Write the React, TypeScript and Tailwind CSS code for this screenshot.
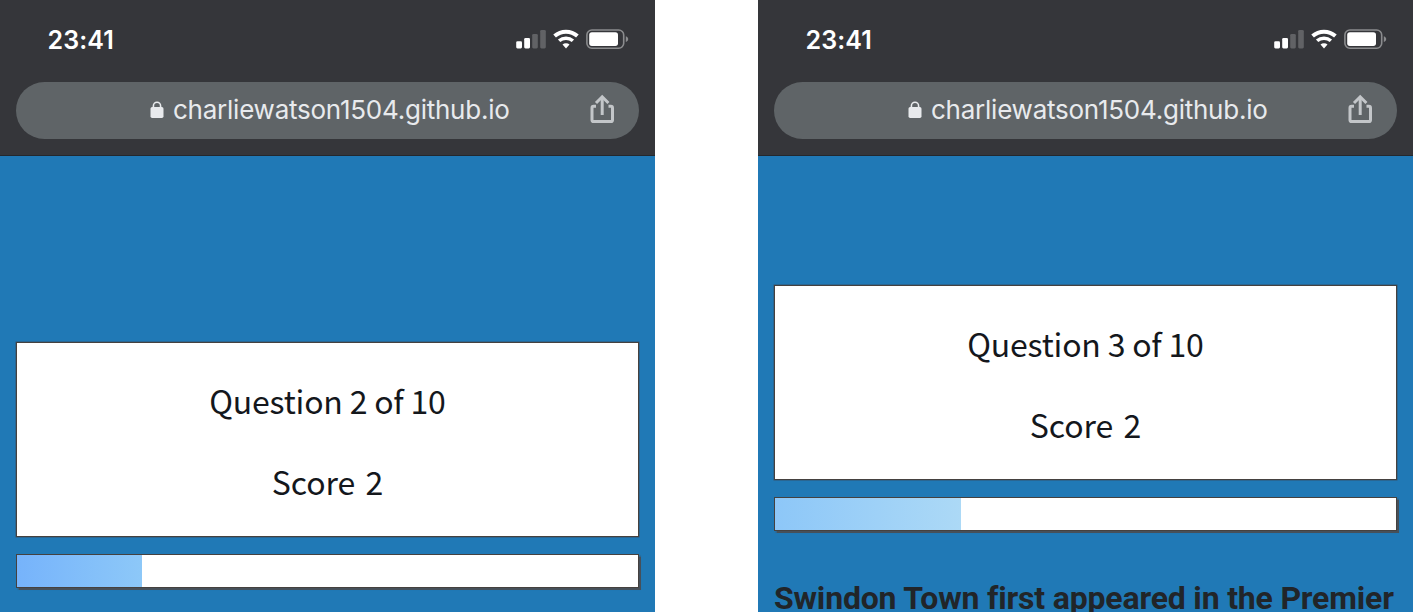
function StatusIcons() {
  return (
    <svg width="114" height="24" viewBox="0 0 114 24" className="shrink-0" fill="none">
      <rect x="1.2" y="13.2" width="5.8" height="7.2" rx="1.3" fill="#fff" />
      <rect x="9.2" y="10" width="5.8" height="10.4" rx="1.3" fill="#fff" />
      <rect x="17.2" y="6" width="5.6" height="14.4" rx="1.3" fill="#616265" />
      <rect x="25.2" y="2" width="5.6" height="18.4" rx="1.3" fill="#616265" />
      <path d="M39.6 8.1a17.2 17.2 0 0 1 22.8 0" stroke="#fff" strokeWidth="4" />
      <path d="M44.1 12.8a10.5 10.5 0 0 1 13.8 0" stroke="#fff" strokeWidth="3.5" />
      <path d="M47.5 16.6a5 5 0 0 1 7 0L51 20.6z" fill="#fff" />
      <rect x="71.9" y="2" width="36.8" height="18.2" rx="5" stroke="#8b8c8e" strokeWidth="1.6" />
      <rect x="74.2" y="4.3" width="28.8" height="13.6" rx="2.6" fill="#fff" />
      <path d="M110.8 8.2c1.6.5 2.4 1.6 2.400 2.900s-.8 2.400-2.400 2.900z" fill="#8b8c8e" />
    </svg>
  );
}

function LockIcon() {
  return (
    <svg width="14" height="18" viewBox="0 0 14 18" className="mb-0.5 shrink-0" fill="none">
      <path d="M3.4 8V4.9a3.600 3.600 0 0 1 7.200 0V8" stroke="#e8eaed" strokeWidth="1.6" />
      <rect x="0.5" y="6" width="13" height="11" rx="1.7" fill="#e8eaed" />
    </svg>
  );
}

function ShareIcon() {
  return (
    <svg width="24" height="30" viewBox="0 0 24 30" className="mb-1 shrink-0" fill="none" stroke="#c3c6c9" strokeWidth="3">
      <path d="M6 12.3H3.600a1.600 1.600 0 0 0-1.600 1.600v12a1.600 1.600 0 0 0 1.600 1.600h17.300a1.600 1.600 0 0 0 1.600-1.600v-12a1.600 1.600 0 0 0-1.600-1.600H18.500" />
      <path d="M12.2 21V3" />
      <path d="M6 9l6.200-6.200L18.400 9" />
    </svg>
  );
}

interface PhoneProps {
  question: number;
  score: number;
  spacer: string;
  bar: string;
  prompt?: string;
}

function Phone({ question, score, spacer, bar, prompt }: PhoneProps) {
  return (
    <section className="flex h-[612px] w-[655px] flex-col overflow-hidden bg-[#2079b6]">
      <header className="flex h-[156px] shrink-0 flex-col border-b border-[#24282d] bg-[#35363a]">
        <div className="flex h-[82px] items-center justify-between pr-[26px] pl-[47.5px] pb-[2px] font-['Inter',sans-serif]">
          <span className="text-[25px] leading-none font-semibold tracking-[0.1px] text-white">23:41</span>
          <StatusIcons />
        </div>
        <div className="mx-4 flex h-[57px] items-center rounded-full bg-[#5f6467] pr-[25px] pl-[134px] font-['Inter',sans-serif]">
          <LockIcon />
          <span className="mb-0.5 ml-[9px] flex-1 text-[26px] leading-none tracking-[-0.24px] whitespace-nowrap text-[#e8eaed]">
            charliewatson1504.github.io
          </span>
          <ShareIcon />
        </div>
      </header>
      <main className={`flex flex-col px-4 ${spacer}`}>
        <div className="flex h-[195px] w-[623px] flex-col items-center border border-[#45413f] bg-white pt-[35px] font-['Noto_Sans_CJK_JP',sans-serif] text-[32px] text-[#14171c] shadow-[0_0_0_0.5px_#34556e]">
          <p className="h-[81px] leading-[44px] tracking-[-0.2px] whitespace-nowrap">Question {question} of 10</p>
          <p className="leading-[44px] tracking-[-0.1px] whitespace-nowrap">
            Score <span className="ml-[3.5px]">{score}</span>
          </p>
        </div>
        <div className="mt-[17px] h-[34px] w-[623px] border border-[#45413f] bg-white shadow-[1px_1px_1px_0.5px_#46505a]">
          <div className={`h-full ${bar}`} />
        </div>
        {prompt && (
          <h2 className="mt-[48px] font-['Roboto',sans-serif] text-[32px] leading-[38px] font-bold tracking-[-0.18px] whitespace-nowrap text-[#212529]">
            {prompt}
          </h2>
        )}
      </main>
    </section>
  );
}

export default function App() {
  return (
    <div className="flex h-[612px] w-[1413px] justify-between overflow-hidden bg-white">
      <Phone question={2} score={2} spacer="pt-[186px]" bar="w-[125px] bg-linear-to-r from-[#76b3fb] to-[#8dc8f8]" />
      <Phone
        question={3}
        score={2}
        spacer="pt-[129px]"
        bar="w-[186px] bg-linear-to-r from-[#8dc7f8] to-[#acd9f6]"
        prompt="Swindon Town first appeared in the Premier"
      />
    </div>
  );
}
